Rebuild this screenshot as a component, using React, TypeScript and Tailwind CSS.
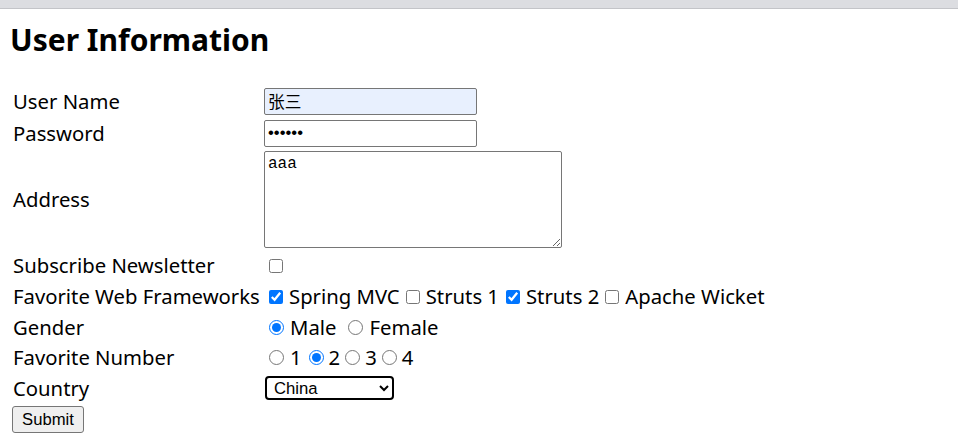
const label = "w-[254px] pl-[3px] shrink-0";
const ctl = "font-['Liberation_Sans','Noto_Sans_CJK_SC',sans-serif] text-[16.67px]";

export default function App() {
  return (
    <div className="min-h-[448px] bg-white text-black font-['Noto_Sans','Noto_Sans_CJK_SC',sans-serif] text-[20.3px]">
      <div className="h-[9px] bg-[#dcdde1] border-b border-[#c3c4c8]" />
      <div className="px-[10px]">
        <h2 className="mt-[10px] text-[30px] font-bold leading-[41px]">User Information</h2>

        <form className="mt-[25px] flex flex-col">
          <div className="flex items-center h-[32px]">
            <div className={label}>User Name</div>
            <input
              type="text"
              defaultValue="张三"
              className={`${ctl} w-[213px] h-[27px] px-[3px] bg-[#e8f0fe] border border-[#767676] rounded-[2px]`}
            />
          </div>
          <div className="flex items-center h-[32px]">
            <div className={label}>Password</div>
            <input
              type="password"
              defaultValue="123456"
              className={`${ctl} w-[213px] h-[27px] px-[3px] border border-[#767676] rounded-[2px]`}
            />
          </div>
          <div className="flex items-center h-[101px]">
            <div className={label}>Address</div>
            <textarea
              defaultValue="aaa"
              className="font-['Liberation_Mono',monospace] text-[16px] leading-[19px] w-[298px] h-[97px] px-[3px] py-[3px] border border-[#767676] rounded-[2px]"
            />
          </div>
          <div className="flex items-center h-[31px]">
            <div className={label}>Subscribe Newsletter</div>
            <input type="checkbox" className="ml-[5px] w-[14px] h-[14px]" />
          </div>
          <div className="flex items-center h-[31px]">
            <div className={label}>Favorite Web Frameworks</div>
            <input type="checkbox" defaultChecked className="ml-[5px] mr-[6px] w-[14px] h-[14px]" />
            <span>Spring MVC</span>
            <input type="checkbox" className="ml-[6px] mr-[6px] w-[14px] h-[14px]" />
            <span>Struts 1</span>
            <input type="checkbox" defaultChecked className="ml-[7px] mr-[6px] w-[14px] h-[14px]" />
            <span>Struts 2</span>
            <input type="checkbox" className="ml-[6px] mr-[6px] w-[14px] h-[14px]" />
            <span>Apache Wicket</span>
          </div>
          <div className="flex items-center h-[30px]">
            <div className={label}>Gender</div>
            <input type="radio" name="g" defaultChecked className="ml-[5px] mr-[6px] w-[15px] h-[15px]" />
            <span>Male</span>
            <input type="radio" name="g" className="ml-[12px] mr-[6px] w-[15px] h-[15px]" />
            <span>Female</span>
          </div>
          <div className="flex items-center h-[31px]">
            <div className={label}>Favorite Number</div>
            <input type="radio" name="n" className="ml-[5px] mr-[6px] w-[15px] h-[15px]" />
            <span>1</span>
            <input type="radio" name="n" defaultChecked className="ml-[7px] mr-[5px] w-[15px] h-[15px]" />
            <span>2</span>
            <input type="radio" name="n" className="ml-[5px] mr-[5px] w-[15px] h-[15px]" />
            <span>3</span>
            <input type="radio" name="n" className="ml-[5px] mr-[5px] w-[15px] h-[15px]" />
            <span>4</span>
          </div>
          <div className="flex items-center h-[30px]">
            <div className={label}>Country</div>
            <select
              defaultValue="CN"
              className={`${ctl} ml-[1px] w-[129px] h-[24px] pl-[3px] border-2 border-black rounded-[4px]`}
            >
              <option value="CN">China</option>
              <option value="US">United States</option>
              <option value="JP">Japan</option>
            </select>
          </div>
          <div className="pl-[2px] -mt-[1px]">
            <button
              type="button"
              className={`${ctl} w-[72px] h-[27px] bg-[#efefef] border border-[#767676] rounded-[3px]`}
            >
              Submit
            </button>
          </div>
        </form>
      </div>
    </div>
  );
}
